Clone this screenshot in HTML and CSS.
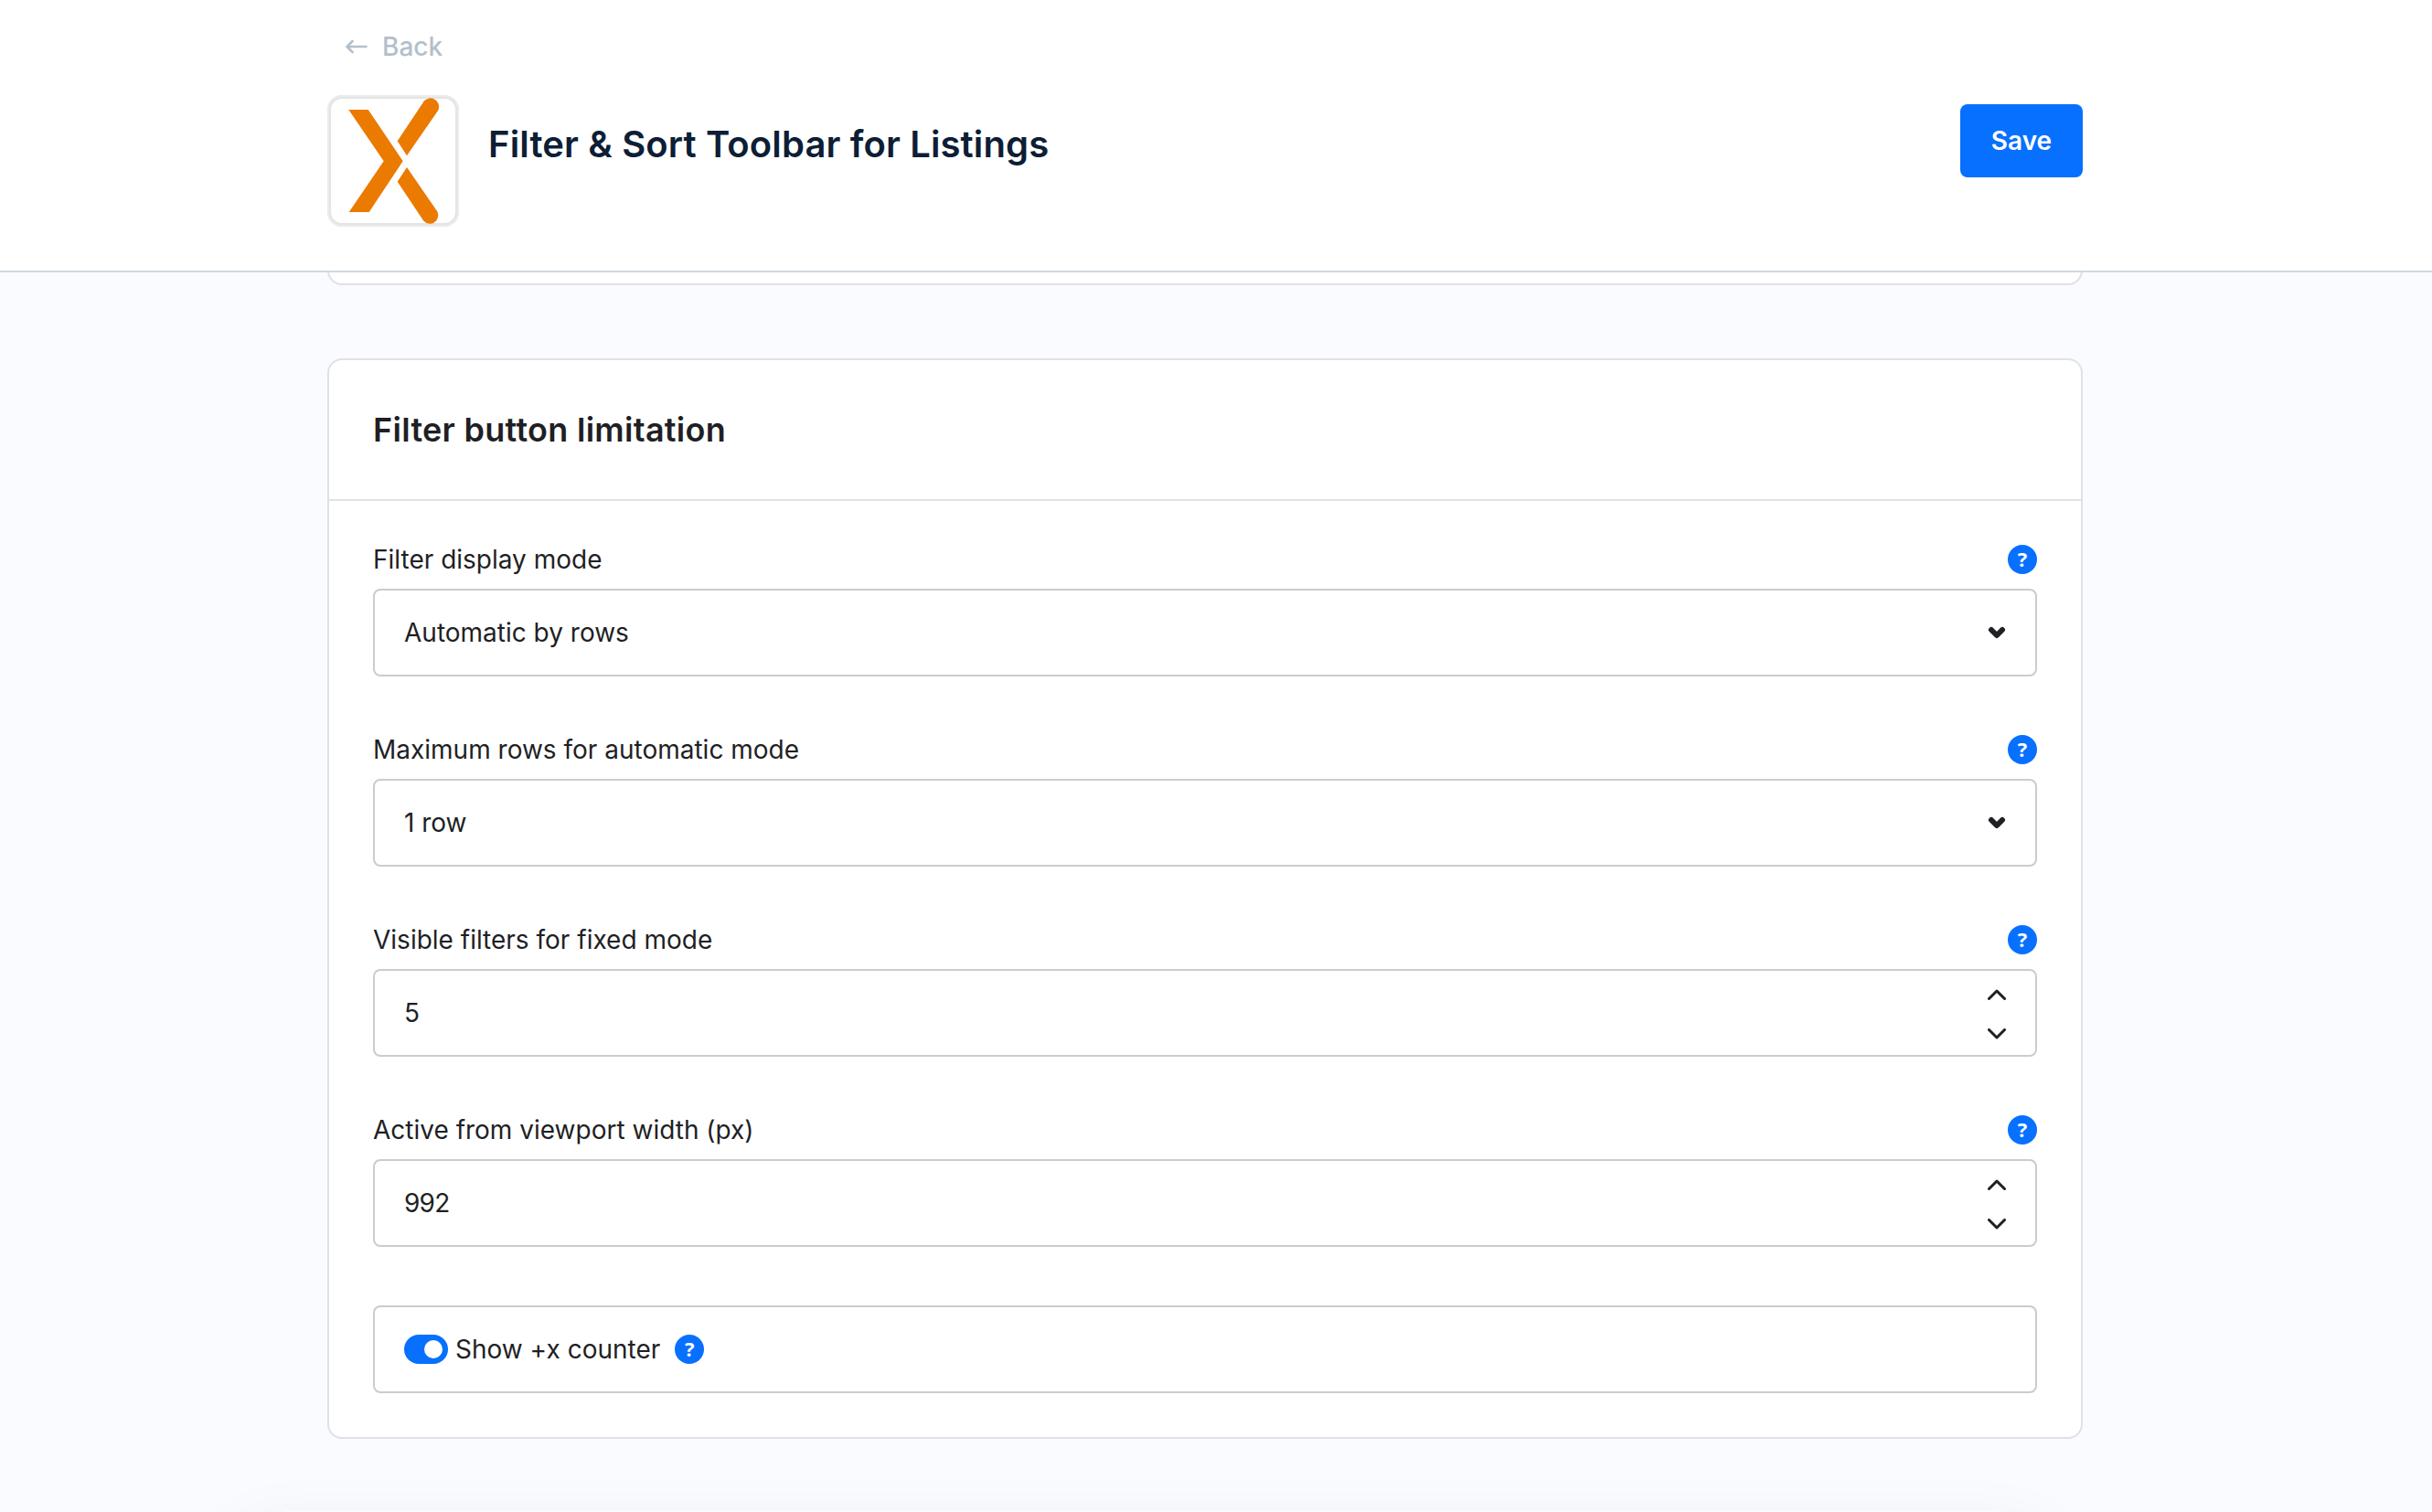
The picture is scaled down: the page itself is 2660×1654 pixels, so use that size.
FILE: index.html
```html
<!DOCTYPE html>
<html lang="en">
<head>
  <meta charset="UTF-8" />
  <meta name="viewport" content="width=device-width, initial-scale=1" />
  <title>Filter &amp; Sort Toolbar for Listings</title>
  <link rel="stylesheet" href="styles.css">
</head>
<body>

<header class="smart-bar">
  <div class="container">
    <a class="back-link" href="#">
      <svg class="back-icon" viewBox="0 0 24 16" fill="none"><path d="M22.5 8H2M7.5 2L1.5 8l6 6" /></svg>
      Back
    </a>
    <div class="smart-bar-row">
      <div class="plugin-logo">
        <svg viewBox="0 0 144 144">
          <path d="M23.3 16H44.7L82.7 72.3L45.7 128H23.7L61.7 72.3Z" />
          <path d="M76.7 50.3L106 6.2A9.4 9.4 0 0 1 121.4 16.4L87 66.3Z" />
          <path d="M87 79L120.4 127.6A9.2 9.2 0 0 1 105.2 137.6L76.7 94.7Z" />
        </svg>
      </div>
      <h1 class="page-title">Filter &amp; Sort Toolbar for Listings</h1>
      <button class="save-btn">Save</button>
    </div>
  </div>
</header>

<main class="content">
  <div class="card card-previous"></div>

  <section class="card">
    <div class="card-header">
      <h2>Filter button limitation</h2>
    </div>
    <div class="card-body">
      <div class="field">
        <div class="field-label"><span>Filter display mode</span><span class="help">?</span></div>
        <div class="field-box">
          <span>Automatic by rows</span>
          <svg class="select-arrow" viewBox="0 0 20 14" fill="none"><path d="M4 4l6 6 6-6" /></svg>
        </div>
      </div>

      <div class="field">
        <div class="field-label"><span>Maximum rows for automatic mode</span><span class="help">?</span></div>
        <div class="field-box">
          <span>1 row</span>
          <svg class="select-arrow" viewBox="0 0 20 14" fill="none"><path d="M4 4l6 6 6-6" /></svg>
        </div>
      </div>

      <div class="field">
        <div class="field-label"><span>Visible filters for fixed mode</span><span class="help">?</span></div>
        <div class="field-box">
          <span class="number">5</span>
          <div class="stepper">
            <svg viewBox="0 0 20 12" fill="none"><path d="M1.5 10.5L10 2l8.5 8.5" /></svg>
            <svg viewBox="0 0 20 12" fill="none"><path d="M1.5 1.5L10 10l8.5-8.5" /></svg>
          </div>
        </div>
      </div>

      <div class="field">
        <div class="field-label"><span>Active from viewport width (px)</span><span class="help">?</span></div>
        <div class="field-box">
          <span class="number">992</span>
          <div class="stepper">
            <svg viewBox="0 0 20 12" fill="none"><path d="M1.5 10.5L10 2l8.5 8.5" /></svg>
            <svg viewBox="0 0 20 12" fill="none"><path d="M1.5 1.5L10 10l8.5-8.5" /></svg>
          </div>
        </div>
      </div>

      <div class="field-box switch-box">
        <span class="switch"><span class="switch-knob"></span></span>
        <span class="switch-label">Show +x counter</span>
        <span class="help">?</span>
      </div>
    </div>
  </section>
</main>

<div class="bottom-shadow"></div>

</body>
</html>
```

FILE: styles.css
```css
* {
  box-sizing: border-box;
}
body {
  margin: 0;
  height: 1654px;
  overflow: hidden;
  background: #fafbff;
  color: #1f1f25;
  font-family: Inter, "Liberation Sans", sans-serif;
  font-size: 28px;
  line-height: 32px;
}

/* Header */
.smart-bar {
  height: 298px;
  padding-right: 24px;
  background: #fff;
  border-bottom: 2px solid #d1d9e0;
}
.container {
  width: 1920px;
  margin: 0 auto;
}
.back-link {
  display: flex;
  align-items: center;
  gap: 16px;
  padding: 35px 0 37px 20px;
  color: #b3bfcc;
  font-weight: 500;
  text-decoration: none;
}
.back-icon {
  width: 24px;
  height: 16px;
  stroke: #b3bfcc;
  stroke-width: 2.6;
  stroke-linecap: round;
  stroke-linejoin: round;
}
.smart-bar-row {
  display: flex;
  align-items: flex-start;
}
.plugin-logo {
  width: 144px;
  height: 144px;
  border-radius: 16px;
  box-shadow: inset 0 0 0 2px #ebebeb, inset 0 0 0 4px #e4e4e4;
}
.plugin-logo svg {
  display: block;
  fill: #eb7a00;
}
.page-title {
  flex: 1;
  margin: 30px 0 0 32px;
  color: #0d1e35;
  font-size: 40px;
  font-weight: 600;
  line-height: 48px;
  letter-spacing: 0.13px;
}
.save-btn {
  width: 134px;
  height: 80px;
  margin-top: 10px;
  padding: 0;
  border: none;
  border-radius: 8px;
  background: #0870ff;
  color: #fff;
  font: 600 28px Inter, sans-serif;
}

/* Cards */
.content {
  display: flex;
  flex-direction: column;
  align-items: center;
  gap: 80px;
  padding-right: 24px;
}
.card {
  width: 1920px;
  background: #fff;
  border: 2px solid #e0e1e8;
  border-radius: 16px;
}
.card-previous {
  height: 40px;
  margin-top: -26px;
  clip-path: inset(26px 0 0 0);
}
.card-header {
  padding: 53px 48px;
  border-bottom: 2px solid #e0e1e8;
}
.card-header h2 {
  margin: 0;
  font-size: 36px;
  font-weight: 600;
  line-height: 46px;
  letter-spacing: 0.28px;
}
.card-body {
  display: flex;
  flex-direction: column;
  gap: 64px;
  padding: 48px;
}

/* Fields */
.field-label {
  display: flex;
  justify-content: space-between;
  margin-bottom: 16px;
}
.help {
  width: 32px;
  height: 32px;
  border-radius: 50%;
  background: #0870ff;
  color: #fff;
  font: 700 22px/30px "Open Sans", "Noto Sans", sans-serif;
  text-align: center;
}
.field-box {
  display: flex;
  align-items: center;
  justify-content: space-between;
  height: 96px;
  padding: 0 32px;
  border: 2px solid #cbcbd2;
  border-radius: 8px;
}
.number {
  letter-spacing: -0.8px;
}
.select-arrow {
  width: 20px;
  height: 14px;
  stroke: #1f1f25;
  stroke-width: 6;
  stroke-linecap: round;
  stroke-linejoin: round;
}
.stepper {
  display: flex;
  flex-direction: column;
  gap: 31px;
  padding-top: 3px;
}
.stepper svg {
  width: 20px;
  height: 12px;
  stroke: #1f1f25;
  stroke-width: 3;
  stroke-linecap: round;
  stroke-linejoin: round;
}
.switch-box {
  justify-content: flex-start;
}
.switch {
  display: flex;
  align-items: center;
  justify-content: flex-end;
  width: 48px;
  height: 32px;
  padding: 0 6px;
  border-radius: 16px;
  background: #0870ff;
}
.switch-knob {
  width: 20px;
  height: 20px;
  border-radius: 50%;
  background: #fff;
}
.switch-label {
  margin: 0 16px 0 8px;
}

/* soft shadow coming up from below the window */
.bottom-shadow {
  height: 2px;
  margin: 78px 474px 0 310px;
  box-shadow: 0 76px 80px 40px rgba(30, 30, 60, 0.1);
}
```
